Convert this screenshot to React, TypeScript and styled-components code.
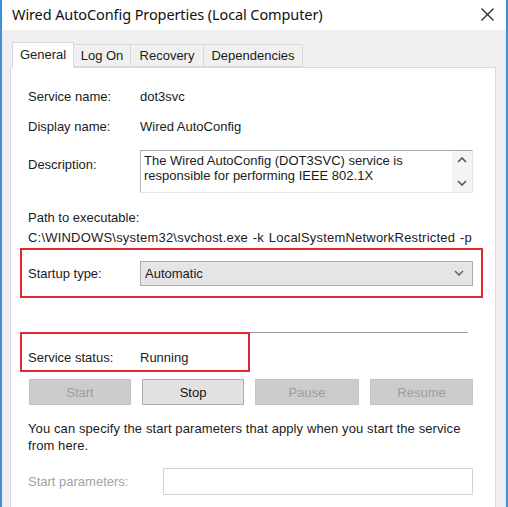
import React from 'react';
import styled, { createGlobalStyle } from 'styled-components';

const GlobalStyle = createGlobalStyle`
  html, body {
    margin: 0;
    padding: 0;
    background: #f0f0f0;
  }
  * {
    box-sizing: border-box;
  }
`;

const Window = styled.div`
  width: 508px;
  height: 507px;
  display: flex;
  flex-direction: column;
  border-left: 2px solid #3c8fd8;
  border-right: 2px solid #3c8fd8;
  background: #f0f0f0;
  font-family: 'Liberation Sans', Arial, sans-serif;
  font-size: 13px;
  color: #1b1b1b;
  overflow: hidden;
`;

const TitleBar = styled.div`
  height: 30px;
  background: #ffffff;
  display: flex;
  align-items: center;
  justify-content: space-between;
  padding: 0 12px 2px 10px;
`;

const Title = styled.span`
  font-family: 'Noto Sans', 'Open Sans', sans-serif;
  font-size: 14.5px;
  letter-spacing: -0.1px;
  color: #111;
`;

const Body = styled.div`
  flex: 1;
  display: flex;
  flex-direction: column;
  padding: 12px 10px 0 8px;
`;

const TabRow = styled.div`
  display: flex;
  align-items: flex-end;
  height: 25px;
  padding-left: 2px;
  position: relative;
  z-index: 1;
`;

const Tab = styled.div<{ $active?: boolean; $w: number }>`
  height: ${({ $active }) => ($active ? '26px' : '23px')};
  width: ${({ $w }) => $w}px;
  display: flex;
  align-items: center;
  justify-content: center;
  background: ${({ $active }) => ($active ? '#ffffff' : '#f0f0f0')};
  border: 1px solid #d9d9d9;
  border-bottom: ${({ $active }) => ($active ? '1px solid #ffffff' : '1px solid #d9d9d9')};
  margin-right: -1px;
  margin-bottom: ${({ $active }) => ($active ? '-1px' : '0')};
  padding-bottom: ${({ $active }) => ($active ? '2px' : '0')};
  color: #1b1b1b;
`;

const Panel = styled.div`
  flex: 1;
  background: #ffffff;
  border: 1px solid #d9d9d9;
  border-bottom: none;
  padding: 21px 0 0 17px;
  display: flex;
  flex-direction: column;
`;

const FieldRow = styled.div<{ $mt?: number }>`
  display: flex;
  align-items: flex-start;
  line-height: 16px;
  margin-top: ${({ $mt }) => $mt ?? 0}px;
`;

const Label = styled.span<{ $pt?: number }>`
  width: 112px;
  flex-shrink: 0;
  padding-top: ${({ $pt }) => $pt ?? 0}px;
`;

const Value = styled.span``;

const DescBox = styled.div`
  width: 333px;
  height: 43px;
  border-top: 1px solid #a8a8a8;
  border-left: 1px solid #b4b4b4;
  border-right: 1px solid #e6e6e6;
  border-bottom: 1px solid #e6e6e6;
  display: flex;
  line-height: 15px;
`;

const DescText = styled.div`
  flex: 1;
  padding: 2px 0 0 3px;
`;

const ScrollCol = styled.div`
  width: 20px;
  background: #f4f4f4;
  display: flex;
  flex-direction: column;
  align-items: center;
  justify-content: space-between;
  padding: 6px 0 6px;
`;

const PathBlock = styled.div`
  margin-top: 17px;
  line-height: 16px;
  display: flex;
  flex-direction: column;
  gap: 4px;
`;

const PathValue = styled.span`
  letter-spacing: 0.2px;
  word-spacing: 1px;
  white-space: nowrap;
`;

const Highlight = styled.div<{ $w: number; $h: number; $mt: number; $top?: boolean }>`
  width: ${({ $w }) => $w}px;
  height: ${({ $h }) => $h}px;
  margin-left: -8px;
  margin-top: ${({ $mt }) => $mt}px;
  border: 2px solid #e2262c;
  display: flex;
  align-items: ${({ $top }) => ($top ? 'flex-start' : 'center')};
  padding-left: 6px;
`;

const Select = styled.div`
  width: 333px;
  height: 25px;
  background: #e5e5e5;
  border: 1px solid #adadad;
  display: flex;
  align-items: center;
  justify-content: space-between;
  padding: 0 8px 0 4px;
`;

const Separator = styled.div`
  width: 448px;
  margin-left: -8px;
  margin-top: 34px;
  border-top: 1px solid #a0a0a0;
`;

const StatusRow = styled.div`
  display: flex;
  align-items: center;
  line-height: 16px;
  padding-top: 16px;
`;

const ButtonRow = styled.div`
  width: 444px;
  display: flex;
  justify-content: space-between;
  margin-top: 7px;
  margin-left: 1px;
`;

const Button = styled.div<{ $disabled?: boolean; $w: number }>`
  width: ${({ $w }) => $w}px;
  height: 26px;
  display: flex;
  align-items: center;
  justify-content: center;
  background: ${({ $disabled }) => ($disabled ? '#cccccc' : '#e1e1e1')};
  border: 1px solid ${({ $disabled }) => ($disabled ? '#c4c4c4' : '#adadad')};
  color: ${({ $disabled }) => ($disabled ? '#9e9e9e' : '#111')};
`;

const Note = styled.p`
  margin: 15px 0 0 0;
  line-height: 17px;
  letter-spacing: 0.1px;
`;

const ParamRow = styled.div`
  display: flex;
  align-items: center;
  margin-top: 14px;
`;

const ParamLabel = styled.span`
  width: 135px;
  color: #a3a3a3;
`;

const ParamInput = styled.div`
  width: 310px;
  height: 27px;
  border: 1px solid #d4d4d4;
  background: #fff;
`;

const CloseIcon = () => (
  <svg width="13" height="13" viewBox="0 0 13 13">
    <path d="M0.5 0.5 L12.5 12.5 M12.5 0.5 L0.5 12.5" stroke="#222" strokeWidth="1.2" fill="none" />
  </svg>
);

const Chevron = ({ up, color = '#555' }: { up?: boolean; color?: string }) => (
  <svg width="10" height="6" viewBox="0 0 10 6">
    <path
      d={up ? 'M1 5 L5 1 L9 5' : 'M1 1 L5 5 L9 1'}
      stroke={color}
      strokeWidth="1.6"
      fill="none"
    />
  </svg>
);

const tabs = [
  { name: 'General', w: 62 },
  { name: 'Log On', w: 58 },
  { name: 'Recovery', w: 74 },
  { name: 'Dependencies', w: 100 },
];

const buttons = [
  { name: 'Start', disabled: true, w: 102 },
  { name: 'Stop', disabled: false, w: 102 },
  { name: 'Pause', disabled: true, w: 104 },
  { name: 'Resume', disabled: true, w: 103 },
];

export default function App() {
  return (
    <>
      <GlobalStyle />
      <Window>
        <TitleBar>
          <Title>Wired AutoConfig Properties (Local Computer)</Title>
          <CloseIcon />
        </TitleBar>
        <Body>
          <TabRow>
            {tabs.map((t, i) => (
              <Tab key={t.name} $active={i === 0} $w={t.w}>
                {t.name}
              </Tab>
            ))}
          </TabRow>
          <Panel>
            <FieldRow>
              <Label>Service name:</Label>
              <Value>dot3svc</Value>
            </FieldRow>
            <FieldRow $mt={14}>
              <Label>Display name:</Label>
              <Value>Wired AutoConfig</Value>
            </FieldRow>
            <FieldRow $mt={15}>
              <Label $pt={7}>Description:</Label>
              <DescBox>
                <DescText>
                  The Wired AutoConfig (DOT3SVC) service is
                  <br />
                  responsible for performing IEEE 802.1X
                </DescText>
                <ScrollCol>
                  <Chevron up />
                  <Chevron />
                </ScrollCol>
              </DescBox>
            </FieldRow>
            <PathBlock>
              <span>Path to executable:</span>
              <PathValue>C:\WINDOWS\system32\svchost.exe -k LocalSystemNetworkRestricted -p</PathValue>
            </PathBlock>
            <Highlight $w={463} $h={50} $mt={2}>
              <Label>Startup type:</Label>
              <Select>
                <span>Automatic</span>
                <Chevron color="#666" />
              </Select>
            </Highlight>
            <Separator />
            <Highlight $w={230} $h={40} $mt={-1} $top>
              <StatusRow>
                <Label>Service status:</Label>
                <Value>Running</Value>
              </StatusRow>
            </Highlight>
            <ButtonRow>
              {buttons.map((b) => (
                <Button key={b.name} $disabled={b.disabled} $w={b.w}>
                  {b.name}
                </Button>
              ))}
            </ButtonRow>
            <Note>
              You can specify the start parameters that apply when you start the service
              <br />
              from here.
            </Note>
            <ParamRow>
              <ParamLabel>Start parameters:</ParamLabel>
              <ParamInput />
            </ParamRow>
          </Panel>
        </Body>
      </Window>
    </>
  );
}
